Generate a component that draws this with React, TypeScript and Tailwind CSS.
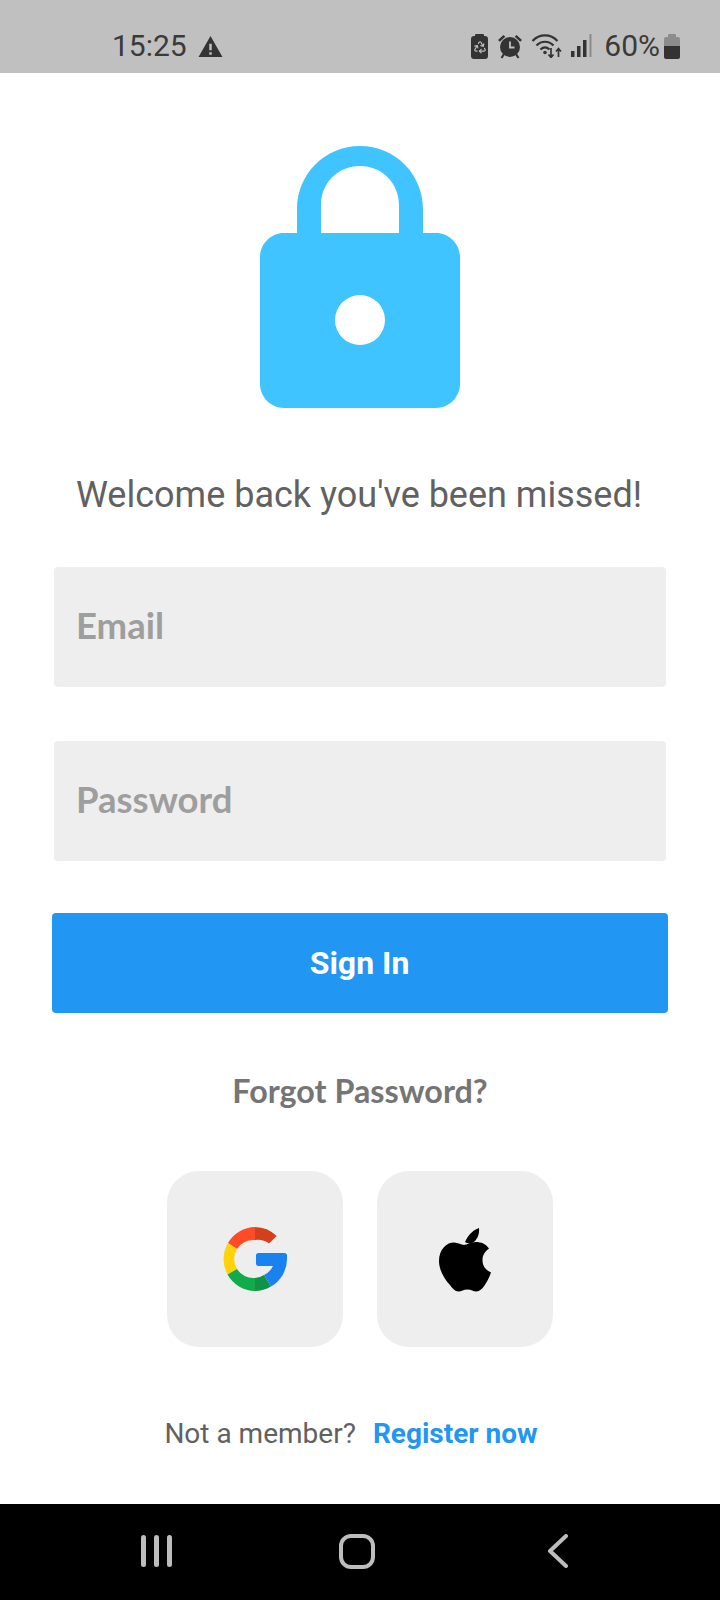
import { Recycle } from 'lucide-react'

function LockIcon() {
  return (
    <svg width="200" height="264" viewBox="0 0 200 264">
      <path
        d="M37 92V64C37 29 65 1 100 1s63 28 63 63v28h-24V60c0-22-17-39-39-39S61 38 61 60v32z"
        fill="#40C4FF"
      />
      <path
        fillRule="evenodd"
        d="M24 88h152c13 0 24 11 24 24v127c0 13-11 24-24 24H24c-13 0-24-11-24-24V112c0-13 11-24 24-24zm76 62a25 25 0 1 0 0 50 25 25 0 0 0 0-50z"
        fill="#40C4FF"
      />
    </svg>
  )
}

function GoogleIcon() {
  return (
    <svg width="64" height="64" viewBox="0 0 64 64" fill="none">
      <path d="M5 16A32 32 0 0 1 32 0v13a19 19 0 0 0-18 9z" fill="#FF4B26" />
      <path d="M32 0a32 32 0 0 1 21.700 9L46 16.500A19 19 0 0 0 32 13z" fill="#D2401E" />
      <path d="M5 16A32 32 0 0 0 4.500 47.500L14 42a19 19 0 0 1 0-20z" fill="#FFD30A" />
      <path d="M4.500 47.500A32 32 0 0 0 32 64V51a19 19 0 0 1-18-9z" fill="#11AB4C" />
      <path d="M32 64a32 32 0 0 0 16-4.500L41 48a19 19 0 0 1-9 3z" fill="#0F9347" />
      <path
        d="M33 28.500c0-1.500 1-2.500 2.500-2.500h26c1.500 0 2.500 1 2.500 2.500V32a32 32 0 0 1-16 27.500L41 48a19 19 0 0 0 9-9H35.500c-1.500 0-2.500-1-2.500-2.500z"
        fill="#1A82EE"
      />
    </svg>
  )
}

function AppleIcon() {
  return (
    <svg width="54" height="66" viewBox="0 0 54 66" fill="#000">
      <path d="M27 15c3-7 8-12 14-14 .6 6-1.500 10-4 13-2.500 2.500-6 3.500-10 1z" transform="translate(0 1)" />
      <path d="M38 16c5 0 10 2 13 6.500-4 3-6.500 6.500-6.500 11.500 0 6 3 10 8.500 12.500-1.500 4.500-3.500 8.500-6.500 13-2.500 3.500-5 6-8 6-3.500 0-5-2-9-2s-6 2-9 2c-3.500 0-6-3-8.500-6.500C6.500 53.500 1 44 1 35c0-11 7-18.500 15-18.500 4 0 7.500 2.500 10 2.500s6.500-3 12-3z" />
    </svg>
  )
}

function StatusIcons() {
  return (
    <div className="flex items-center text-[#333]">
      <div className="mr-[10px] flex h-[25px] w-[17px] flex-col items-center">
        <div className="h-[2px] w-[9px] rounded-t-[1px] bg-[#333]" />
        <div className="flex w-full flex-1 items-center justify-center rounded-[3px] bg-[#333]">
          <Recycle size={14} color="#c0c0c0" strokeWidth={2} />
        </div>
      </div>
      <svg width="24" height="25" viewBox="0 0 24 25" className="mr-[9px]" fill="#333">
        <circle cx="12" cy="13" r="10" />
        <path d="M0 6l5.500-5 1.800 1.800-5.500 5zM24 6l-5.500-5-1.800 1.800 5.500 5z" />
        <path d="M12 7.500v6h4.500" stroke="#c0c0c0" strokeWidth="1.800" fill="none" />
        <path d="M6 20l-2.500 4M18 20l2.500 4" stroke="#333" strokeWidth="2.200" />
      </svg>
      <svg width="31" height="24" viewBox="0 0 30 24" fill="none" stroke="#333" strokeWidth="2.200" className="mr-[9px]">
        <path d="M1 7c7-7.500 18-7.500 25 0" />
        <path d="M5 11.500c5-5 12-5 17 0" />
        <path d="M9 15.500c3-2.800 6-2.800 9 0" />
        <circle cx="13.500" cy="18.500" r="1.800" fill="#333" stroke="none" />
        <path d="M19.500 14v9M17 20.500l2.500 3 2.500-3M27 23v-8M24.500 17.500l2.500-3 2.500 3" strokeWidth="1.700" />
      </svg>
      <svg width="21" height="24" viewBox="0 0 21 24" className="mr-[12px]">
        <rect x="0" y="17" width="3.500" height="6" fill="#333" />
        <rect x="6" y="12" width="3.500" height="11" fill="#333" />
        <rect x="12" y="6" width="3.500" height="17" fill="#333" />
        <rect x="18.500" y="0" width="2" height="23" fill="#8a8a8a" />
      </svg>
      <span className="text-[30px] leading-none text-[#3a3a3a]">60%</span>
      <div className="ml-[4px] flex h-[25px] w-[16px] flex-col items-center">
        <div className="h-[3px] w-[8px] rounded-t-[1px] bg-[#8c8c8c]" />
        <div className="flex w-full flex-1 flex-col overflow-hidden rounded-[2px]">
          <div className="h-[9px] bg-[#8c8c8c]" />
          <div className="flex-1 bg-[#333]" />
        </div>
      </div>
    </div>
  )
}

export default function App() {
  return (
    <div className="flex h-[1600px] w-[720px] flex-col bg-white font-['Roboto',sans-serif]">
      <div className="flex h-[73px] items-center justify-between bg-[#c0c0c0] pl-[112px] pr-[40px] pt-[19px]">
        <div className="flex items-center gap-[11px] text-[#3a3a3a]">
          <span className="text-[30px] leading-none">15:25</span>
          <svg width="25" height="23" viewBox="0 0 26 24">
            <path fillRule="evenodd" d="M13 1l12.500 22H.500zM11.700 9v7h2.600V9zm0 9v2.600h2.600V18z" fill="#333" />
          </svg>
        </div>
        <StatusIcons />
      </div>

      <div className="flex flex-1 flex-col items-center">
        <div className="mt-[72px] flex">
          <LockIcon />
        </div>

        <p className="mt-[62px] mr-[2px] text-[36px] leading-[48px] text-[#616161]">Welcome back you've been missed!</p>

        <div className="mt-[48px] flex h-[120px] w-[612px] items-center rounded-[4px] bg-[#eeeeee] px-[22px] pb-[4px]">
          <span className="font-['Lato',sans-serif] text-[36.500px] font-bold text-[#9e9e9e]">Email</span>
        </div>
        <div className="mt-[54px] flex h-[120px] w-[612px] items-center rounded-[4px] bg-[#eeeeee] px-[22px] pb-[4px]">
          <span className="font-['Lato',sans-serif] text-[36.500px] font-bold text-[#9e9e9e]">Password</span>
        </div>

        <button className="mt-[52px] flex h-[100px] w-[616px] items-center justify-center rounded-[4px] bg-[#2196f3] pr-[1px] text-[32px] font-bold text-white">
          Sign In
        </button>

        <p className="mt-[56px] font-['Lato',sans-serif] text-[32.300px] leading-[44px] font-bold text-[#757575]">
          Forgot Password?
        </p>

        <div className="mt-[58px] flex gap-[34px]">
          <div className="flex h-[176px] w-[176px] items-center justify-center rounded-[32px] bg-[#eeeeee]">
            <GoogleIcon />
          </div>
          <div className="flex h-[176px] w-[176px] items-center justify-center rounded-[32px] bg-[#eeeeee]">
            <AppleIcon />
          </div>
        </div>

        <div className="mt-[69px] mr-[18px] flex items-center gap-[17px] text-[28px] leading-[36px]">
          <span className="text-[#616161]">Not a member?</span>
          <span className="font-bold text-[#2196f3]">Register now</span>
        </div>
      </div>

      <div className="flex h-[96px] items-center bg-black pl-[141px] pb-[2px]">
        <div className="flex gap-[8px]">
          <div className="h-[32px] w-[5px] rounded-full bg-[#bdbdbd]" />
          <div className="h-[32px] w-[5px] rounded-full bg-[#bdbdbd]" />
          <div className="h-[32px] w-[5px] rounded-full bg-[#bdbdbd]" />
        </div>
        <div className="ml-[167px] h-[35px] w-[36px] rounded-[12px] border-[4px] border-[#bdbdbd]" />
        <svg width="20" height="34" viewBox="0 0 20 34" fill="none" className="ml-[173px]">
          <path d="M18 2L2 17l16 15" stroke="#bdbdbd" strokeWidth="4" strokeLinecap="round" strokeLinejoin="round" />
        </svg>
      </div>
    </div>
  )
}
